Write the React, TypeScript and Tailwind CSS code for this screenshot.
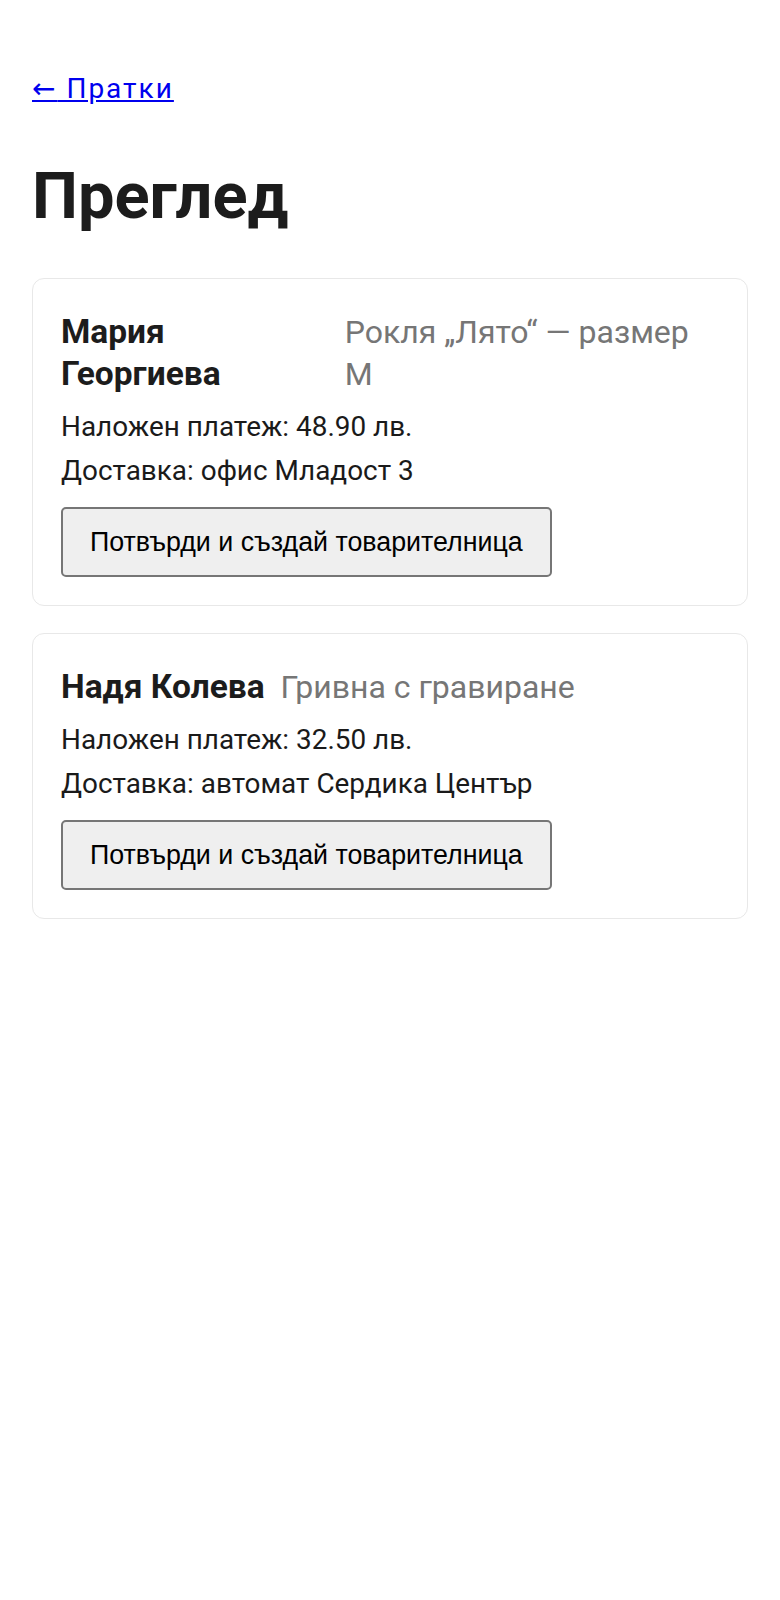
import React from "react";

const orders = [
  {
    name: "Мария Георгиева",
    item: "Рокля „Лято“ — размер M",
    cod: "48.90",
    delivery: "офис Младост 3",
  },
  {
    name: "Надя Колева",
    item: "Гривна с гравиране",
    cod: "32.50",
    delivery: "автомат Сердика Център",
  },
];

const App = () => {
  return (
    <div className="min-h-screen bg-white px-8 pt-[68px] text-[#1a1a1a]" style={{ fontFamily: "Roboto, sans-serif" }}>
      <a href="#" className="text-[28px] leading-[42px] tracking-[2px] text-[#0000ee] underline">
        <span style={{ fontFamily: '"DejaVu Sans", sans-serif' }}>←</span> Пратки
      </a>
      <h1 className="mt-[46px] text-[65px] font-bold leading-[80px] text-[#1c1c1c]">Преглед</h1>
      <div className="mt-[42px] flex flex-col gap-[27px]">
        {orders.map((o) => (
          <div key={o.name} className="rounded-xl border border-[#e8e8e8] px-7 pt-[32px] pb-7">
            <div className="flex gap-4 leading-[42px]">
              <div className="text-[33.5px] font-bold text-[#1c1c1c]">{o.name}</div>
              <div className="text-[32px] text-[#767676]">{o.item}</div>
            </div>
            <div className="mt-[10px] text-[27.9px] leading-[44px]">
              <p>Наложен платеж: {o.cod} лв.</p>
              <p>Доставка: {o.delivery}</p>
            </div>
            <button
              className="mt-[14px] h-[70px] rounded-[5px] border-2 border-[#767676] bg-[#efefef] px-[27px] text-[26.8px] text-black"
              style={{ fontFamily: '"Liberation Sans", Arial, sans-serif' }}
            >
              Потвърди и създай товарителница
            </button>
          </div>
        ))}
      </div>
    </div>
  );
};

export default App;
